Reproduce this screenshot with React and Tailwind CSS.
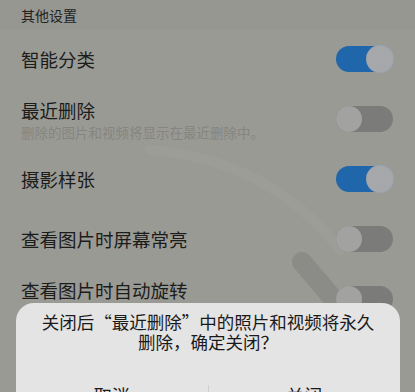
import React from 'react';

const font = { fontFamily: '"Noto Sans CJK SC", "Noto Sans", sans-serif' };

function Toggle({ on }) {
  return on ? (
    <div className="relative h-[26px] w-[57px] rounded-full bg-[#1f66aa]">
      <div className="absolute right-0 top-0 h-[26px] w-[26px] rounded-full bg-[#a6a8ab] ring-1 ring-[#9aa4ae]" />
    </div>
  ) : (
    <div className="relative h-[26px] w-[57px] rounded-full bg-[#7b7b79]">
      <div className="absolute left-0 top-0 h-[26px] w-[26px] rounded-full bg-[#a2a2a1]" />
    </div>
  );
}

function Row({ title, sub, on }) {
  return (
    <div className="flex h-[60px] items-center justify-between pl-[21px] pr-[22px]">
      <div className="flex flex-col">
        <span className="text-[18.5px] leading-[24px] text-[#1c1c1a]">{title}</span>
        {sub && <span className="mt-[2px] text-[13.5px] leading-[17px] text-[#85857f]">{sub}</span>}
      </div>
      <Toggle on={on} />
    </div>
  );
}

export default function App() {
  return (
    <div className="relative h-[392px] w-[415px] overflow-hidden bg-[#9a9a95]" style={font}>
      {/* faint background illustration */}
      <svg className="absolute left-0 top-0" width="415" height="392" viewBox="0 0 415 392">
        <path d="M150 150 Q 270 160 340 250" stroke="#ffffff" strokeOpacity="0.035" strokeWidth="10" fill="none" strokeLinecap="round" />
        <path d="M302 262 L 360 330" stroke="#7f7f7b" strokeOpacity="0.55" strokeWidth="20" fill="none" strokeLinecap="round" />
      </svg>

      <div className="relative">
        <div className="flex h-[29px] items-center bg-[#979792] pl-[21px]">
          <span className="text-[14px] leading-[20px] text-[#222220]">其他设置</span>
        </div>
        <Row title="智能分类" on />
        <Row title="最近删除" sub="删除的图片和视频将显示在最近删除中。" />
        <Row title="摄影样张" on />
        <Row title="查看图片时屏幕常亮" />
        <Row title="查看图片时自动旋转" sub="　" />
      </div>

      {/* dialog */}
      <div className="absolute left-[16px] top-[303px] h-[120px] w-[384px] rounded-t-[18px] bg-[#e4e4e4]">
        <p className="px-[20px] pt-[9px] text-center text-[17.5px] leading-[20px] text-[#1a1a1a]">
          关闭后“最近删除”中的照片和视频将永久删除，确定关闭？
        </p>
        <div className="mt-[31px] flex items-start">
          <div className="flex-1 text-center text-[18px] leading-[24px] text-[#1a1a1a]">取消</div>
          <div className="mt-[2px] h-[20px] w-px bg-[#cfcfcf]" />
          <div className="flex-1 text-center text-[18px] leading-[24px] text-[#1a1a1a]">关闭</div>
        </div>
      </div>
    </div>
  );
}
